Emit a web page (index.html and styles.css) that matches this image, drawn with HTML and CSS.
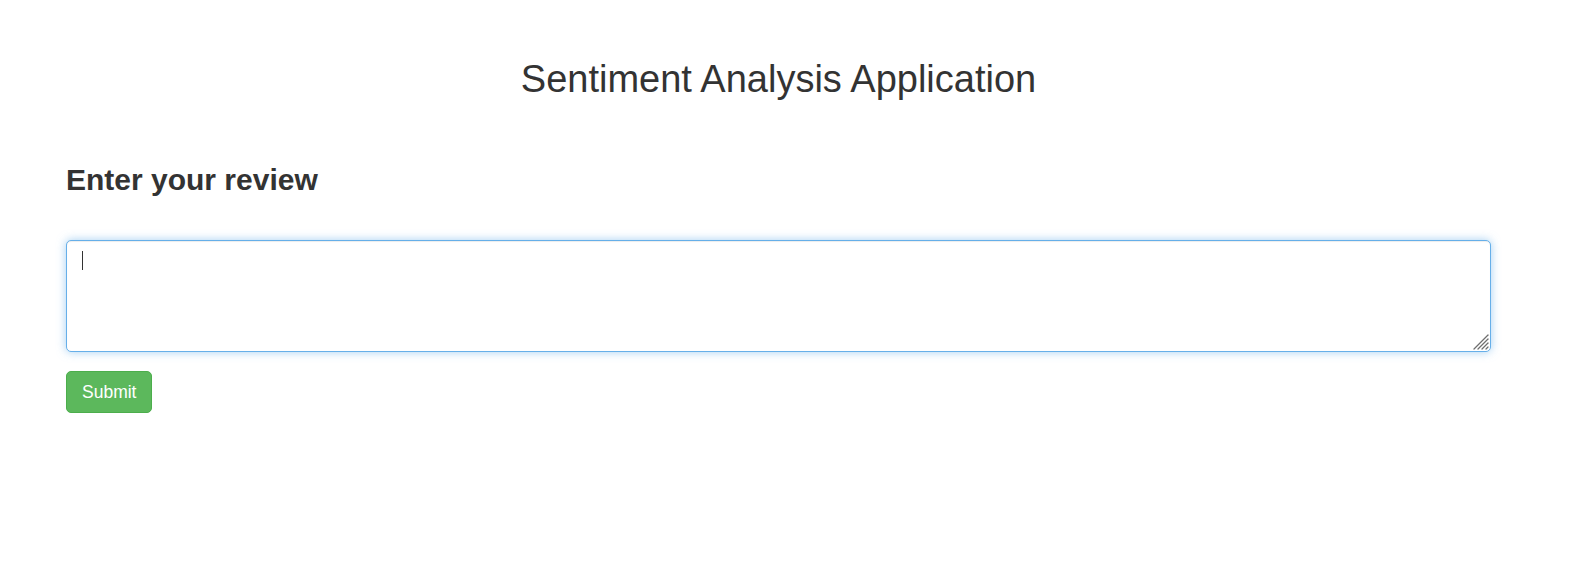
FILE: index.html
```html
<!DOCTYPE html>
<html lang="en">
<head>
<meta charset="utf-8">
<title>Sentiment Analysis Application</title>
<link rel="stylesheet" href="styles.css">
</head>
<body>
<div class="page">
  <h2 class="title">Sentiment Analysis Application</h2>
  <h3 class="section-title">Enter your review</h3>
  <form class="review-form">
    <div class="field">
      <textarea class="review-input" name="review"></textarea>
      <span class="caret"></span>
      <svg class="grip" width="16" height="16" viewBox="0 0 16 16" aria-hidden="true">
        <g stroke="#6f6f6f" stroke-width="1.3" stroke-linecap="round">
          <line x1="1" y1="15" x2="15" y2="1"/>
          <line x1="5" y1="15" x2="15" y2="5"/>
          <line x1="9" y1="15" x2="15" y2="9"/>
          <line x1="13" y1="15" x2="15" y2="13"/>
        </g>
      </svg>
    </div>
    <button type="button" class="btn-submit">Submit</button>
  </form>
</div>
</body>
</html>
```
FILE: styles.css
```css
html, body {
  margin: 0;
  padding: 0;
  background: #fff;
}
body {
  font-family: "Liberation Sans", Arial, Helvetica, sans-serif;
  color: #333;
}
.page {
  padding: 59px 92px 0 66px;
}
.title {
  margin: 0;
  font-size: 38px;
  line-height: 41px;
  font-weight: normal;
  text-align: center;
}
.section-title {
  margin: 63px 0 0;
  font-size: 30px;
  line-height: 33px;
  font-weight: bold;
}
.review-form {
  margin: 44px 0 0;
  display: flex;
  flex-direction: column;
  align-items: flex-start;
}
.field {
  position: relative;
  width: 100%;
}
.review-input {
  display: block;
  width: 100%;
  height: 112px;
  box-sizing: border-box;
  margin: 0;
  padding: 7.5px 15px;
  border: 1.25px solid #66afe9;
  border-radius: 5px;
  box-shadow: inset 0 1px 1px rgba(0,0,0,.075), 0 0 10px rgba(102,175,233,.6);
  font-family: "Liberation Sans", Arial, sans-serif;
  font-size: 17.5px;
  line-height: 25px;
  color: #555;
  outline: none;
  background: #fff;
  resize: none;
}
.caret {
  position: absolute;
  left: 16px;
  top: 11px;
  width: 1px;
  height: 19px;
  background: #333;
}
.grip {
  position: absolute;
  right: 2px;
  bottom: 2px;
}
.btn-submit {
  margin-top: 19px;
  padding: 7.5px 15px;
  font-family: "Liberation Sans", Arial, sans-serif;
  font-size: 17.5px;
  line-height: 25px;
  color: #fff;
  background: #5cb85c;
  border: 1.25px solid #4cae4c;
  border-radius: 5px;
  cursor: pointer;
}
```
